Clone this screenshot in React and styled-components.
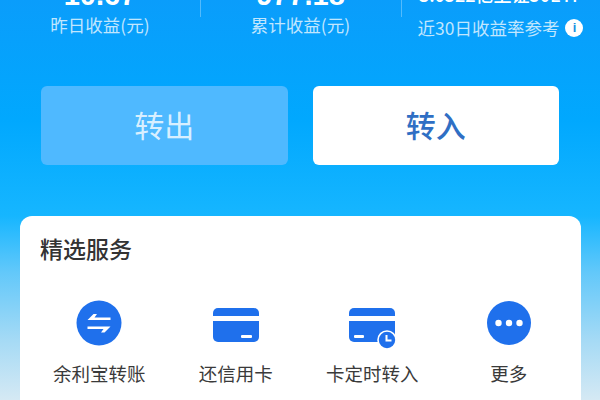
import React from 'react';
import styled, { createGlobalStyle } from 'styled-components';

const GlobalStyle = createGlobalStyle`
  html, body {
    margin: 0;
    padding: 0;
    overflow: hidden;
  }
  * {
    box-sizing: border-box;
  }
`;

const stats = [
  { value: '10.67', label: '昨日收益(元)' },
  { value: '977.18', label: '累计收益(元)' },
];

const services = [
  { name: '余利宝转账', icon: <TransferIcon /> },
  { name: '还信用卡', icon: <CardIcon /> },
  { name: '卡定时转入', icon: <ClockCardIcon /> },
  { name: '更多', icon: <MoreIcon /> },
];

function TransferIcon() {
  return (
    <svg width="46" height="46" viewBox="0 0 46 46">
      <circle cx="23" cy="23" r="22.5" fill="#1f70ec" />
      <path d="M11.5 20h23v-2.4H18.5l2.5-3.6h-3.5l-6 6z" fill="#fff" />
      <path d="M34.5 26.5h-23v2.4h16l-2.5 3.6h3.5l6-6z" fill="#fff" />
    </svg>
  );
}

function CardIcon() {
  return (
    <svg width="46" height="46" viewBox="0 0 46 46">
      <path d="M0 13a5 5 0 0 1 5-5h36a5 5 0 0 1 5 5v3H0z" fill="#1f70ec" />
      <path d="M0 21h46v16a5 5 0 0 1-5 5H5a5 5 0 0 1-5-5z" fill="#1f70ec" />
      <rect x="28" y="35" width="11" height="3" rx="1" fill="#fff" />
    </svg>
  );
}

function ClockCardIcon() {
  return (
    <svg width="46" height="46" viewBox="0 0 46 46" style={{ overflow: 'visible' }}>
      <path d="M0 13a5 5 0 0 1 5-5h36a5 5 0 0 1 5 5v3H0z" fill="#1f70ec" />
      <path d="M0 21h46v16a5 5 0 0 1-5 5H5a5 5 0 0 1-5-5z" fill="#1f70ec" />
      <rect x="5" y="35" width="10" height="3" rx="1" fill="#fff" />
      <circle cx="38" cy="40" r="9" fill="#1f70ec" stroke="#fff" strokeWidth="1.6" />
      <path d="M37.5 35v5.5h5" stroke="#fff" strokeWidth="2" fill="none" />
    </svg>
  );
}

function MoreIcon() {
  return (
    <svg width="46" height="46" viewBox="0 0 46 46">
      <circle cx="23" cy="23" r="22" fill="#1f70ec" />
      <circle cx="12.5" cy="23" r="3.2" fill="#fff" />
      <circle cx="23" cy="23" r="3.2" fill="#fff" />
      <circle cx="33.5" cy="23" r="3.2" fill="#fff" />
    </svg>
  );
}

const App = () => {
  return (
    <Page>
      <GlobalStyle />
      <StatsRow>
        {stats.map((s) => (
          <Stat key={s.label}>
            <StatValue>{s.value}</StatValue>
            <StatLabel>{s.label}</StatLabel>
          </Stat>
        ))}
        <Stat>
          <StatValueSmall>3.0522亿上证50ETF</StatValueSmall>
          <RateLabel>
            近30日收益率参考
            <InfoDot>i</InfoDot>
          </RateLabel>
        </Stat>
      </StatsRow>
      <Buttons>
        <ActionButton>转出</ActionButton>
        <ActionButton $primary>转入</ActionButton>
      </Buttons>
      <Card>
        <CardTitle>精选服务</CardTitle>
        <ServiceGrid>
          {services.map((s) => (
            <Service key={s.name}>
              <IconSlot>{s.icon}</IconSlot>
              <ServiceName>{s.name}</ServiceName>
            </Service>
          ))}
        </ServiceGrid>
      </Card>
    </Page>
  );
};

export default App;

const Page = styled.div`
  width: 600px;
  height: 400px;
  overflow: hidden;
  background: linear-gradient(180deg, #0a9dfb 0%, #01a8fe 30%, #16b6ff 54%, #62c8fa 68%, #a5daf5 85%, #d5e9f4 100%);
  font-family: "Noto Sans CJK SC", "Liberation Sans", sans-serif;
`;

const StatsRow = styled.div`
  display: grid;
  grid-template-columns: 200px 201px 199px;
  height: 102px;
  margin-top: -16px;
`;

const Stat = styled.div`
  display: flex;
  flex-direction: column;
  align-items: center;
  position: relative;
  color: #fff;

  & + &::before {
    content: '';
    position: absolute;
    left: 0;
    top: 16px;
    height: 17px;
    width: 1px;
    background: rgba(255, 255, 255, 0.3);
  }
`;

const StatValue = styled.div`
  font-family: "Liberation Sans", sans-serif;
  font-size: 29px;
  font-weight: 700;
  line-height: 30px;
  height: 30px;
  margin-top: -4px;
`;

const StatValueSmall = styled.div`
  font-size: 18px;
  font-weight: 500;
  line-height: 24px;
  height: 30px;
  margin-top: -2px;
`;

const StatLabel = styled.div`
  font-size: 17.5px;
  line-height: 22px;
  color: rgba(255, 255, 255, 0.75);
  margin-top: 4px;
`;

const RateLabel = styled(StatLabel)`
  display: flex;
  align-items: center;
  gap: 6px;
  margin-top: 5px;
`;

const InfoDot = styled.span`
  width: 18px;
  height: 18px;
  border-radius: 50%;
  background: #fff;
  color: #1a8fe0;
  font-family: "Liberation Sans", sans-serif;
  font-size: 13px;
  font-weight: 700;
  display: flex;
  align-items: center;
  justify-content: center;
`;

const Buttons = styled.div`
  display: flex;
  gap: 25px;
  padding: 0 41px;
`;

const ActionButton = styled.div`
  flex: 1;
  height: 79px;
  padding-bottom: 3px;
  border-radius: 6px;
  background: ${(p) => (p.$primary ? '#fff' : '#4fb9ff')};
  color: ${(p) => (p.$primary ? '#2f6fc4' : 'rgba(255, 255, 255, 0.8)')};
  font-size: 30px;
  font-weight: ${(p) => (p.$primary ? 500 : 400)};
  display: flex;
  align-items: center;
  justify-content: center;
`;

const Card = styled.div`
  margin: 51px 0 0 20px;
  width: 561px;
  height: 200px;
  background: #fff;
  border-radius: 12px;
  padding: 16px 0 0 20px;
`;

const CardTitle = styled.div`
  font-size: 23px;
  font-weight: 500;
  line-height: 32px;
  color: #333;
`;

const ServiceGrid = styled.div`
  display: grid;
  grid-template-columns: repeat(4, 136.5px);
  margin: 36px 0 0 -9px;
`;

const Service = styled.div`
  display: flex;
  flex-direction: column;
  align-items: center;
`;

const IconSlot = styled.div`
  height: 46px;
  display: flex;
  align-items: flex-start;
`;

const ServiceName = styled.div`
  font-size: 18.5px;
  line-height: 26px;
  color: #3a3a3a;
  margin-top: 14px;
`;
